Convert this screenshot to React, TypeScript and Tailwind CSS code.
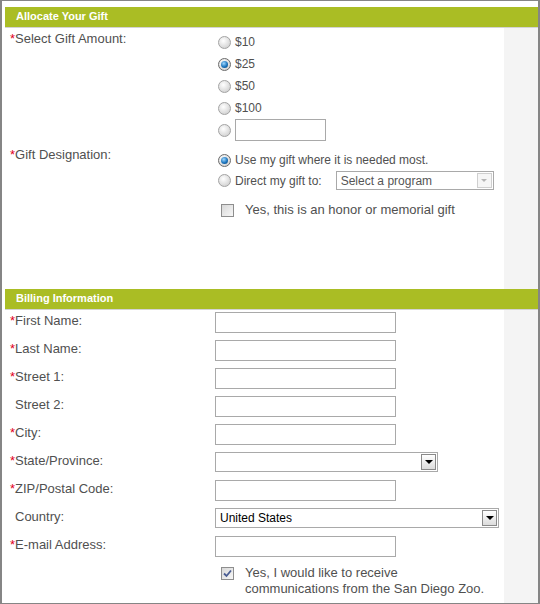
import React from "react";

const Radio = ({ checked = false }: { checked?: boolean }) => (
  <span
    className={`inline-flex h-[13px] w-[13px] shrink-0 items-center justify-center rounded-full border ${
      checked ? "border-[#6b6b6b]" : "border-[#a3a3a3]"
    } bg-[radial-gradient(circle_at_40%_35%,#ffffff,#d2d2d2_80%)]`}
  >
    {checked && (
      <span className="h-[7px] w-[7px] rounded-full bg-[radial-gradient(circle_at_40%_35%,#9fd8ff,#1b74bd_55%,#0b3f70)]" />
    )}
  </span>
);

const Checkbox = ({ checked = false }: { checked?: boolean }) => (
  <span className="inline-flex h-[13px] w-[13px] shrink-0 items-center justify-center border border-[#8e8e8e] bg-[linear-gradient(135deg,#d8d8d8,#f7f7f7)]">
    {checked && (
      <svg width="9" height="9" viewBox="0 0 9 9">
        <path d="M1 4.5 L3.5 7 L8 1.5" fill="none" stroke="#4a5d93" strokeWidth="1.8" />
      </svg>
    )}
  </span>
);

const SelectBox = ({
  text,
  width,
  height,
  disabled = false,
}: {
  text: string;
  width: string;
  height: string;
  disabled?: boolean;
}) => (
  <div
    className={`flex items-center justify-between border border-[#a9a9a9] bg-white pl-[4px] pr-[1px] ${width} ${height}`}
  >
    <span className={disabled ? "text-[12px] text-[#555]" : "text-[12px] text-black"}>{text}</span>
    {disabled ? (
      <span className="flex h-[15px] w-[15px] items-center justify-center border border-[#cfcfcf] bg-[#f6f6f6]">
        <span className="h-0 w-0 border-x-[3px] border-t-[3px] border-x-transparent border-t-[#b5b5b5]" />
      </span>
    ) : (
      <span className="flex h-[16px] w-[15px] items-center justify-center border border-[#8a8a8a] bg-[linear-gradient(#ffffff,#dcdcdc)]">
        <span className="h-0 w-0 border-x-[4px] border-t-[4px] border-x-transparent border-t-black" />
      </span>
    )}
  </div>
);

const Label = ({ text, required = true }: { text: string; required?: boolean }) => (
  <div className="w-[205px] shrink-0 leading-[16px]">
    {required ? <span className="text-[#e2001a]">*</span> : <span className="inline-block w-[5px]" />}
    {text}
  </div>
);

const Header = ({ title }: { title: string }) => (
  <div className="flex h-[21px] items-center border-b border-[#d3d3d3] bg-[#aabd24] pb-[1px] pl-[11px] text-[11px] font-bold text-white">
    {title}
  </div>
);

const TextInput = ({ width = "w-[181px]" }: { width?: string }) => (
  <div className={`mt-[2px] h-[21px] border border-[#a9a9a9] bg-white ${width}`} />
);

const amounts = ["$10", "$25", "$50", "$100"];

const billing: { label: string; required: boolean; kind: "input" | "state" | "country" }[] = [
  { label: "First Name:", required: true, kind: "input" },
  { label: "Last Name:", required: true, kind: "input" },
  { label: "Street 1:", required: true, kind: "input" },
  { label: "Street 2:", required: false, kind: "input" },
  { label: "City:", required: true, kind: "input" },
  { label: "State/Province:", required: true, kind: "state" },
  { label: "ZIP/Postal Code:", required: true, kind: "input" },
  { label: "Country:", required: false, kind: "country" },
  { label: "E-mail Address:", required: true, kind: "input" },
];

export default function App() {
  return (
    <div className="flex h-[604px] w-[540px] flex-col border-x-2 border-y border-[#858585] bg-white pl-[3px] pt-[6px] font-['Liberation_Sans',Arial,sans-serif] text-[13px] text-[#505050]">
      <Header title="Allocate Your Gift" />
      <div className="flex h-[261px]">
        <div className="flex-1 pl-[5px] pt-[3px]">
          <div className="flex">
            <Label text="Select Gift Amount:" />
            <div className="flex flex-col text-[12px]">
              {amounts.map((a) => (
                <div key={a} className="flex h-[22px] items-center gap-[4px] pl-[3px]">
                  <Radio checked={a === "$25"} />
                  <span>{a}</span>
                </div>
              ))}
              <div className="flex h-[22px] items-center gap-[4px] pl-[3px]">
                <Radio />
                <div className="h-[22px] w-[91px] border border-[#a9a9a9] bg-white" />
              </div>
            </div>
          </div>

          <div className="mt-[6px] flex">
            <Label text="Gift Designation:" />
            <div className="flex flex-col pt-[3px]">
              <div className="flex h-[20px] items-center gap-[4px] pl-[3px] text-[12px]">
                <Radio checked />
                <span>Use my gift where it is needed most.</span>
              </div>
              <div className="flex h-[21px] items-center gap-[4px] pl-[3px] text-[12px]">
                <Radio />
                <span>Direct my gift to:</span>
                <div className="ml-[10px]">
                  <SelectBox text="Select a program" width="w-[158px]" height="h-[19px]" disabled />
                </div>
              </div>
              <div className="mt-[10px] flex h-[18px] items-center gap-[11px] pl-[6px]">
                <Checkbox />
                <span>Yes, this is an honor or memorial gift</span>
              </div>
            </div>
          </div>
        </div>
        <div className="w-[34px] bg-[#f4f4f4]" />
      </div>

      <Header title="Billing Information" />
      <div className="flex flex-1">
        <div className="flex-1 pl-[5px]">
          {billing.map((row) => (
            <div key={row.label} className="flex h-[28px] items-start">
              <div className="pt-[3px]">
                <Label text={row.label} required={row.required} />
              </div>
              {row.kind === "input" && <TextInput />}
              {row.kind === "state" && (
                <div className="mt-[2px]">
                  <SelectBox text="" width="w-[223px]" height="h-[20px]" />
                </div>
              )}
              {row.kind === "country" && (
                <div className="mt-[2px]">
                  <SelectBox text="United States" width="w-[284px]" height="h-[20px]" />
                </div>
              )}
            </div>
          ))}
          <div className="flex">
            <div className="w-[205px] shrink-0" />
            <div className="flex items-start gap-[11px] pl-[6px]">
              <div className="mt-[2px]">
                <Checkbox checked />
              </div>
              <div className="pt-[3px] leading-[16px]">
                Yes, I would like to receive
                <br />
                communications from the San Diego Zoo.
              </div>
            </div>
          </div>
        </div>
        <div className="w-[34px] bg-[#f4f4f4]" />
      </div>
    </div>
  );
}
